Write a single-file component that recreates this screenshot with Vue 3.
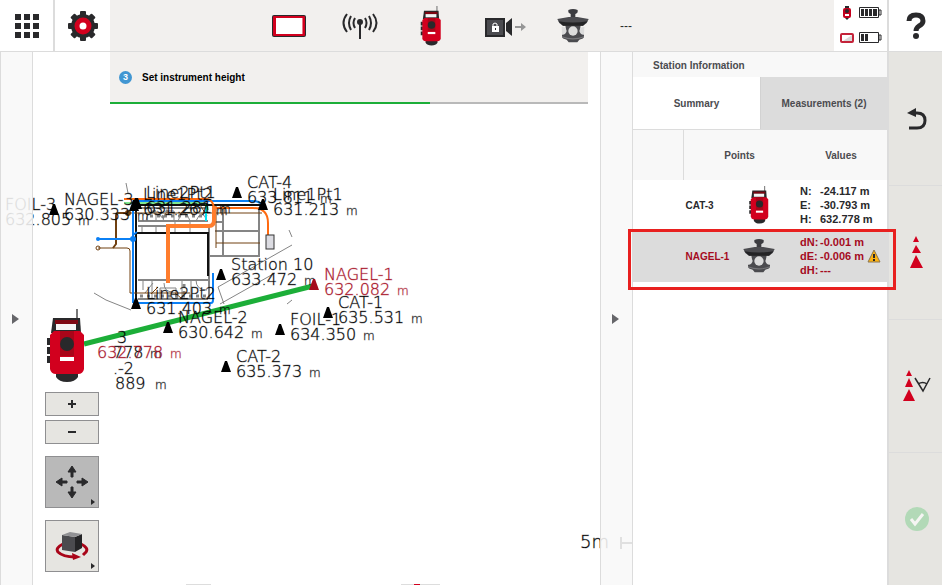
<script setup>
const points = [
  { name: 'FOIL-3', value: '632.805', x: 54, y: 214, dx: -49, dy: 5 },
  { name: 'NAGEL-3', value: '630.333', x: 134, y: 210, dx: -70, dy: 4 },
  { name: 'Line2Pt1', value: '631.281', x: 137, y: 208, dx: 9, dy: -1 },
  { name: 'Line1Pt2', value: '631.267', x: 136, y: 208, dx: 7, dy: 1 },
  { name: 'CAT-4', value: '633.811', x: 237, y: 197 },
  { name: 'Line1Pt1', value: '631.213', x: 263, y: 209 },
  { name: 'Station 10', value: '633.472', x: 221, y: 279 },
  { name: 'CAT-1', value: '635.531', x: 328, y: 317 },
  { name: 'FOIL-1', value: '634.350', x: 280, y: 334 },
  { name: 'CAT-2', value: '635.373', x: 226, y: 371 },
  { name: 'NAGEL-2', value: '630.642', x: 168, y: 332 },
  { name: 'Line2Pt2', value: '631.403', x: 136, y: 308 },
  { name: 'NAGEL-1', value: '632.082', x: 314, y: 289, red: true },
]
const rows = [
  {
    name: 'CAT-3', icon: 'station',
    values: [['N:', '-24.117 m'], ['E:', '-30.793 m'], ['H:', '632.778 m']],
  },
  {
    name: 'NAGEL-1', icon: 'prism', selected: true,
    values: [['dN:', '-0.001 m'], ['dE:', '-0.006 m', true], ['dH:', '---']],
  },
]
</script>

<template>
  <div class="app">
    <svg class="defs" aria-hidden="true">
      <symbol id="station" viewBox="0 0 40 74">
        <path d="M31 0V12" stroke="#777" stroke-width="2" />
        <path d="M7 9H34L35 24H5Z" fill="#29292b" />
        <path d="M9 11H32V15H9Z" fill="#7d0712" />
        <path d="M10 15H30V21H10Z" fill="#f4f4f4" />
        <path d="M1 29H5V36H1ZM1 38H5V45H1ZM1 47H5V54H1Z" fill="#29292b" />
        <path d="M10 62H32V68Q29 73 21 73T10 68Z" fill="#29292b" />
        <path d="M8 22H34L38 26V60Q37 65 32 65H10Q5 65 4 60V26Z" fill="#d2001e" />
        <path d="M14 22H28V47H14Z" fill="#a90519" />
        <circle cx="21" cy="35" r="7" fill="#29292b" />
        <path d="M14 48H28V52H14Z" fill="#fff" />
      </symbol>
      <symbol id="prism" viewBox="0 0 94 102">
        <path d="M24 48H70L68 62L80 76V82Q80 90 66 92L60 100H34L28 92Q14 90 14 82V76L26 62Z" fill="#4b4b4f" />
        <path d="M13 54Q25 52 28 66Q25 78 14 77ZM81 54Q69 52 66 66Q69 78 80 77Z" fill="#dcdcdc" />
        <circle cx="47" cy="66" r="14" fill="#dcdcdc" />
        <path d="M14 82Q47 94 80 82V85Q47 98 14 85Z" fill="#77777a" />
        <path d="M33 3Q47-3 61 3V10Q57 15 54 15V30H40V15Q36 14 33 10Z" fill="#3c3c40" />
        <path d="M0 30L34 24H60L94 30L88 42L77 50H17L6 42Z" fill="#4b4b4f" />
        <path d="M3 37Q47 44 91 37L77 50H17Z" fill="#232325" />
      </symbol>
    </svg>

    <header class="topbar">
      <button class="top-button" aria-label="Home">
        <svg width="24" height="24" viewBox="0 0 24 24" fill="#29292b">
          <path d="M0 0H6V6H0ZM9 0H15V6H9ZM18 0H24V6H18ZM0 9H6V15H0ZM9 9H15V15H9ZM18 9H24V15H18ZM0 18H6V24H0ZM9 18H15V24H9ZM18 18H24V24H18Z" />
        </svg>
      </button>
      <button class="top-button last" aria-label="Settings">
        <svg width="32" height="32" viewBox="-16 -16 32 32">
          <g fill="#29292b">
            <circle r="12" />
            <rect v-for="a in [0, 45, 90, 135]" :key="a" x="-3" y="-15" width="6" height="30" rx="1" :transform="`rotate(${a})`" />
          </g>
          <circle r="6" fill="#fff" stroke="#d2001e" stroke-width="5" />
        </svg>
      </button>
      <div class="status">
        <div class="status-item">
          <svg width="34" height="22" viewBox="0 0 34 22">
            <rect width="34" height="22" rx="2" fill="#29292b" />
            <rect x="1" y="1" width="32" height="20" rx="1" fill="#d2001e" />
            <rect x="4" y="3" width="26" height="16" fill="#fff" />
            <path d="M30.500 3V19" stroke="#e97382" />
          </svg>
        </div>
        <div class="status-item">
          <svg width="36" height="28" viewBox="0 0 36 28" fill="none" stroke="#29292b" stroke-width="2">
            <path d="M18 11V27M13 6Q10 11 13 16M23 6Q26 11 23 16M9 4Q5 11 9 18M27 4Q31 11 27 18M5 2Q-2 11 5 20M31 2Q38 11 31 20" />
            <circle cx="18" cy="10" r="2" fill="#29292b" />
          </svg>
        </div>
        <div class="status-item"><svg width="22" height="40"><use href="#station" /></svg></div>
        <div class="status-item camera">
          <svg width="42" height="20" viewBox="0 0 42 20">
            <path d="M1 1H19V18H1Z" fill="#4b4b4f" stroke="#29292b" stroke-width="2" />
            <path d="M27 0V18L21 13V5Z" fill="#29292b" />
            <path d="M7 8H14V14H7Z" fill="#fff" /><path d="M8 9V6Q10 4 12 6V9" fill="none" stroke="#fff" />
            <path d="M10 10H11V12H10Z" fill="#29292b" />
            <path d="M30 8H36V5L41 9L36 13V10H30Z" fill="#969696" />
          </svg>
        </div>
        <div class="status-item"><svg width="32" height="34"><use href="#prism" /></svg></div>
        <div class="status-item text">---</div>
      </div>
      <div class="batteries">
        <svg width="44" height="14" viewBox="0 0 44 14">
          <path d="M6 0H10V12L8 14L6 12Z" fill="#29292b" /><rect x="4" y="2" width="8" height="10" rx="2" fill="#c4001d" /><circle cx="8" cy="5" r="2" fill="#29292b" /><path d="M6 8H10V10H6Z" fill="#fff" />
          <path d="M20.500 1.500H39.500V11.500H20.500ZM40 4H42V9H40Z" fill="#fff" stroke="#29292b" />
          <path d="M22 3H25V10H22ZM26 3H29V10H26ZM30 3H33V10H30ZM34 3H38V10H34Z" fill="#29292b" />
        </svg>
        <svg width="44" height="14" viewBox="0 0 44 14">
          <rect x="2" y="3" width="12" height="8" rx="1" fill="#fff" stroke="#c4233a" stroke-width="2" />
          <path d="M13 4V10H4Z" fill="#d9d9d9" />
          <path d="M20.500 1.500H39.500V11.500H20.500ZM40 4H42V9H40Z" fill="#fff" stroke="#29292b" />
          <path d="M22 3H25V10H22ZM26 3H29V10H26Z" fill="#29292b" />
        </svg>
      </div>
      <button class="top-button help" aria-label="Help">
        <svg width="20" height="28" viewBox="0 0 20 28">
          <path d="M3 9Q3 3 10 3Q17 3 17 9Q17 12 13 14Q10 16 10 19" fill="none" stroke="#29292b" stroke-width="5" />
          <circle cx="10" cy="24" r="3" fill="#29292b" />
        </svg>
      </button>
    </header>

    <main class="work">
      <section class="map">
        <svg class="canvas" aria-label="Site map">
          <g transform="translate(0 -52)" fill="none">
            <g stroke="#858585">
              <path d="M94 293L106 300L131 310M126 183L128 193M218 287L292 245M220 304L275 273M218 287L224 304M289 230L292 237M287 304L292 300" />
              <path d="M259 207V257M208 256H260M215 231H259M215 182" stroke-width="2" />
              <path d="M223 206V256M138 221H208M137 208H208M138 226H208M209 226V298M138 280H208M138 299H208M215 222H223V229" stroke-width="2" />
              <path d="M142 226V232M156 226V232M175 221V232M190 221V232M146 221Q147 211 156 211V221M163 221Q164 209 174 211V221M178 221Q184 205 190 221M196 221Q202 207 207 221M143 290V280M152 299V281M160 299V288H176V299M182 299V280M191 281V299M196 280Q196 290 207 290M145 293L153 283M164 283Q164 292 173 292" />
              <path d="M140 296H206M150 216H204M184 284V297M153 210L163 219M168 210L162 218" stroke-width="3" stroke-dasharray="3 4" />
            </g>
            <path d="M137 205H263M136 205V303M137 233H208V276" stroke="#111" stroke-width="2" />
            <path d="M98 248H127Q130 248 130 251V293H190M113 248L116 244V216Q116 213 119 213H262M216 206V248M216 243H260M200 205L207 216M151 294L158 287M175 293L181 298" stroke="#704010" stroke-width="1" />
            <path d="M113 248L116 244V216Q116 213 119 213H128" stroke="#704010" stroke-width="2" />
            <path d="M98 239H133M133 303V204Q133 201 136 201H252Q260 201 263 206M133 303H211Q213 303 213 300V273M133 235L137 232" stroke="#0b80f5" stroke-width="2" />
            <path d="M124 203H202Q208 203 208 210" stroke="#00d320" />
            <path d="M206 206V221" stroke="#00e5f5" stroke-width="2" />
            <path d="M124 199H207Q213 200 214 208H253Q268 208 268 223V236" stroke="#ff6a10" stroke-width="2" />
            <path d="M168 283V226H209Q214 226 214 220V206" stroke="#ff7d2d" stroke-width="4" />
            <circle cx="98" cy="239" r="2" fill="#0b80f5" /><circle cx="133" cy="239" r="3" fill="#0b80f5" />
            <circle cx="98" cy="248" r="2" stroke="#704010" /><circle cx="128" cy="213" r="3" fill="#704010" />
            <rect x="266" y="235" width="8" height="14" fill="#dcdce2" stroke="#333" />
            <path d="M84 344L313 286" stroke="#1cae38" stroke-width="5" />
          </g>
          <g transform="translate(0 -52)" class="cad">
            <g v-for="p in points" :key="p.name" :class="{ red: p.red }" :transform="`translate(${p.x} ${p.y})`">
              <path d="M-5 1L-1-10H1L5 1Z" />
              <text :x="p.dx ?? 10" :y="(p.dy ?? 0) - 9">{{ p.name }}</text>
              <text :x="p.dx ?? 10" :y="(p.dy ?? 0) + 6">{{ p.value }}</text>
              <text :x="(p.dx ?? 10) + 73" :y="(p.dy ?? 0) + 6" class="unit">m</text>
            </g>
            <text x="117" y="343">3</text><text x="113" y="358">778</text><text x="150" y="358" class="unit">m</text>
            <g class="red"><text x="97" y="358">632.778</text><text x="170" y="358" class="unit">m</text></g>
            <text x="113" y="374">.-2</text><text x="115" y="389">889</text><text x="155" y="389" class="unit">m</text>
            <text x="580" y="548" class="scale">5m</text>
            <path d="M620 537H622V542H640V544H622V549H620Z" fill="#333" />
            <path d="M401 584H440V585H401ZM186 584H211V585H186Z" fill="#ddd" /><path d="M414 584H420V585H414Z" fill="#d2001e" />
          </g>
          <use href="#station" x="46" y="257" width="40" height="74" />
        </svg>

        <div class="guide">
          <span class="step">3</span>Set instrument height
        </div>
        <button class="rail left" aria-label="Open left panel"><span class="arrow"></span></button>
        <button class="rail right" aria-label="Collapse panel"><span class="arrow"></span></button>

        <div class="tools">
          <button class="tool" aria-label="Zoom in"><svg width="10" height="10"><path d="M1 5H9M5 1V9" stroke="#29292b" stroke-width="2" /></svg></button>
          <button class="tool" aria-label="Zoom out"><svg width="10" height="10"><path d="M1 5H9" stroke="#29292b" stroke-width="2" /></svg></button>
          <button class="tool big active" aria-label="Pan">
            <svg width="36" height="36" viewBox="-18 -18 36 36" fill="#29292b">
              <path v-for="a in [0, 90, 180, 270]" :key="a" d="M-1-5V-10H-4L0-16L4-10H1V-5Z" stroke="#29292b" :transform="`rotate(${a})`" />
            </svg>
            <span class="more"></span>
          </button>
          <button class="tool big" aria-label="Orbit">
            <svg width="34" height="30" viewBox="0 0 34 30">
              <path d="M8 13Q0 17 3 21Q8 26 20 26M26 13Q34 17 31 21L28 24" fill="none" stroke="#a90519" stroke-width="3" />
              <path d="M17 22L26 26L18 29Z" fill="#a90519" />
              <path d="M7 4L20 6V21L7 19Z" fill="#4b4b4f" /><path d="M20 6L27 3V17L20 21Z" fill="#242426" /><path d="M7 4L15 1L27 3L20 6Z" fill="#919194" />
            </svg>
            <span class="more"></span>
          </button>
        </div>
      </section>

      <aside class="info">
        <h1>Station Information</h1>
        <nav class="tabs">
          <button class="tab">Summary</button>
          <button class="tab active">Measurements (2)</button>
        </nav>
        <table>
          <thead>
            <tr><th class="mark"></th><th colspan="2" class="points">Points</th><th>Values</th></tr>
          </thead>
          <tbody>
            <tr v-for="r in rows" :key="r.name" :class="{ selected: r.selected }">
              <td class="first"></td>
              <td class="name">{{ r.name }}</td>
              <td class="device"><svg width="32" :height="r.icon === 'prism' ? 34 : 38"><use :href="'#' + r.icon" /></svg></td>
              <td class="values">
                <div v-for="v in r.values" :key="v[0]" class="value">
                  <span class="label">{{ v[0] }}</span><span>{{ v[1] }}</span>
                  <svg v-if="v[2]" class="warning" width="14" height="14" viewBox="0 0 14 14">
                    <path d="M7 1L13 13H1Z" fill="#ffb30f" stroke="#8a7550" /><path d="M6 5H8V9H6ZM6 10H8V12H6Z" fill="#29292b" />
                  </svg>
                </div>
              </td>
            </tr>
          </tbody>
        </table>
      </aside>

      <div class="actions">
        <button aria-label="Back">
          <svg width="20" height="22" viewBox="0 0 20 22"><path d="M2 20H10Q18 20 18 12.500Q18 5 10 5H7" fill="none" stroke="#29292b" stroke-width="3" /><path d="M0 5L9 0V9Z" fill="#29292b" /></svg>
        </button>
        <button aria-label="Measure">
          <svg width="13" height="32" viewBox="0 0 13 32" fill="#d2001e"><path d="M6 0L9 6H3ZM6 9L11 17H2ZM6 19L13 32H0Z" /></svg>
        </button>
        <button aria-label="Measure and store">
          <svg width="28" height="32" viewBox="0 0 28 32"><path d="M6 0L9 6H3ZM6 8L10 17H2ZM6 19L12 31H0Z" fill="#d2001e" /><path d="M12 8L20 21L27 8M15 14Q20 11 24 14" fill="none" stroke="#29292b" stroke-width="1.500" /></svg>
        </button>
        <button aria-label="Confirm">
          <svg width="24" height="24" viewBox="0 0 24 24"><circle cx="12" cy="12" r="12" fill="#b2d9b7" /><path d="M6 12L10 17L18 7" fill="none" stroke="#f5f5f3" stroke-width="3" /></svg>
        </button>
      </div>
    </main>
  </div>
</template>

<style>
body { margin: 0; }
</style>

<style scoped>
.app { display: flex; flex-direction: column; min-height: 100vh; background: #fff; color: #29292b; font: bold 10px "Liberation Sans", Arial, sans-serif; }
button { border: 0; padding: 0; margin: 0; font: inherit; color: inherit; background: none; display: flex; align-items: center; justify-content: center; }
svg { display: block; }
.defs { position: absolute; width: 0; height: 0; }

.topbar { display: flex; height: 51px; border-bottom: 1px solid #dcdcdc; }
.top-button { width: 55px; border-right: 2px solid #dcdcdc; box-sizing: border-box; }
.top-button.last { border-right: 0; }
.top-button.help { border-right: 0; border-left: 2px solid #dcdcdc; }
.status { flex: 1; display: flex; justify-content: center; padding-right: 12px; background: #f2f0ee; }
.status-item { width: 71px; display: flex; align-items: center; justify-content: center; }
.status-item.text { justify-content: flex-start; padding-left: 12px; box-sizing: border-box; font-size: 12px; font-weight: normal; }
.status-item.camera { box-sizing: border-box; padding: 4px 0 0 8px; }
.batteries { width: 53px; display: flex; flex-direction: column; align-items: center; justify-content: center; gap: 11px; }

.work { flex: 1; display: flex; }
.map { position: relative; flex: 1; overflow: hidden; }
.canvas { position: absolute; inset: 0; width: 100%; height: 100%; }
.guide { position: relative; display: flex; align-items: center; gap: 10px; height: 50px; margin: 0 45px 0 110px; padding: 0 0 2px 9px; background: linear-gradient(90deg, #1cae38 67%, #b9b9b9 67%) bottom / 100% 2px no-repeat, #f2f0ee; color: #000; }
.step { width: 13px; height: 13px; border-radius: 50%; background: #4196d2; color: #fff; line-height: 13px; text-align: center; font-size: 9px; }
.rail { position: absolute; top: 0; bottom: 0; width: 33px; box-sizing: border-box; background: rgba(248, 248, 248, 0.88); border: solid #dcdcdc; border-width: 0 1px; }
.left { left: 0; }
.right { right: 0; }
.arrow { border: solid transparent; border-width: 5px 0 5px 7px; border-left-color: #66666a; margin-right: 3px; }
.tools { position: absolute; left: 45px; top: 340px; width: 54px; display: flex; flex-direction: column; gap: 4px; }
.tool { position: relative; height: 24px; background: #e6e5e1; border: 1px solid #8f8f91; }
.tool.big { height: 52px; margin-top: 8px; }
.tool.active { background: #b9b9b9; }
.more { position: absolute; right: 3px; bottom: 2px; border: solid transparent; border-width: 3px 0 3px 4px; border-left-color: #29292b; }

.cad { fill: #000; font: 200 16px "DejaVu Sans", sans-serif; }
.cad text { stroke: rgba(0, 0, 0, 0.3); stroke-width: 1px; }
.cad .red { fill: #a50b1e; }
.cad .red text { stroke: rgba(165, 11, 30, 0.3); }
.cad .unit { font-size: 12px; }
.cad .scale { font-size: 18px; }

.info { width: 254px; border-right: 2px solid #dcdcdc; color: #4b4b4f; }
h1 { margin: 0; padding: 1px 20px 0; height: 24px; line-height: 25px; font-size: 10px; background: #f8f8f8; }
.tabs { display: grid; grid-template-columns: 1fr 1fr; height: 52px; border-bottom: 1px solid #dcdcdc; }
.tab.active { background: #dcdcdc; border-left: 1px solid #d2d2d2; }
table { width: 100%; table-layout: fixed; border-collapse: collapse; }
th { height: 50px; padding: 0; background: #f8f8f8; }
.mark { width: 50px; border-right: 1px solid #dcdcdc; }
.points { width: 111px; }
td { padding: 4px 0 5px; color: #29292b; }
tr.selected { position: relative; background: #dcdcdc; }
tr.selected td { color: #a50b1e; }
tr.selected .first::after { content: ""; position: absolute; inset: -2px -9px -8px -5px; border: 3px solid #e8201f; z-index: 2; }
td.name { padding-left: 2px; }
.device svg { margin-left: 4px; }
td.values { padding-left: 5px; font-size: 11px; line-height: 14px; }
.value { display: flex; height: 14px; white-space: nowrap; }
.label { width: 20px; }
.warning { margin-left: 3px; }

.actions { width: 53px; display: grid; grid-template-rows: repeat(4, 1fr); background: #e6e5e1; }
.actions button { padding-left: 2px; }
.actions button + button { border-top: 1px solid #dcdcdc; }
</style>
